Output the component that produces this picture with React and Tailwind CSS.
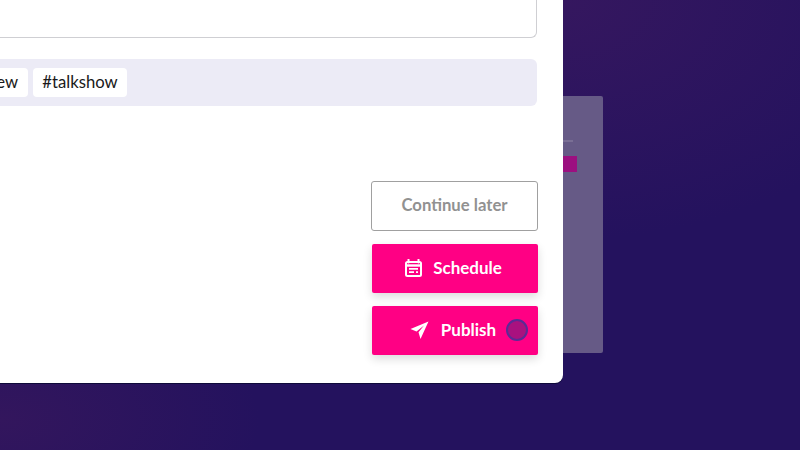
export default function App() {
  const font = { fontFamily: '"Lato", "Open Sans", sans-serif' };
  return (
    <div className="relative w-[800px] h-[450px] overflow-hidden bg-[#24125e]" style={font}>
      <div className="absolute inset-0 bg-[radial-gradient(ellipse_380px_240px_at_560px_0px,#35175f_0%,#35175f00_100%)]" />
      <div className="absolute inset-0 bg-[radial-gradient(ellipse_260px_130px_at_0px_420px,#33165d_0%,#33165d00_100%)]" />
      {/* blurred window behind the card */}
      <div className="absolute left-[500px] top-[96px] w-[103px] h-[257px] rounded-[2px] bg-[#665a86] blur-[0.7px]">
        <div className="absolute left-[63px] top-[44px] w-[10px] h-[2px] bg-[#7a6f95]" />
        <div className="absolute left-[60px] top-[60px] w-[17px] h-[16px] bg-[#9c1080]" />
      </div>

      {/* main card */}
      <div className="relative w-[563px] h-[384px] -mt-px rounded-br-lg bg-white shadow-[0_1px_0_#0f0a3a] flex flex-col items-end pr-[26px]">
        <div className="w-[600px] h-[39px] shrink-0 border-b border-r border-[#cfcfd3] rounded-br-md" />
        <div className="w-[600px] h-[47px] mt-[21px] shrink-0 rounded-md bg-[#ecebf6] overflow-hidden flex items-center gap-[5px]">
          <div className="w-[91px] shrink-0 flex justify-end">
            <span className="shrink-0 h-[29px] px-[10px] rounded-[4px] bg-white text-[16.7px] leading-[29px] text-[#1a1a1a]">#interview</span>
          </div>
          <span className="shrink-0 h-[29px] w-[94px] text-center rounded-[4px] bg-white text-[16.7px] leading-[29px] text-[#1a1a1a]">#talkshow</span>
        </div>

        <div className="mt-[75px] mr-[-1px] w-[167px] flex flex-col gap-[13px]">
          <button className="h-[50px] rounded-[3px] border border-[#a0a0a0] bg-white text-[16.7px] font-bold text-[#919191]">
            Continue later
          </button>
          <button className="h-[49px] pb-[2px] pr-[3px] ml-[1px] w-[166px] rounded-[2px] bg-[#ff0084] text-white text-[17px] font-bold flex items-center justify-center gap-[11px] shadow-[0_4px_10px_rgba(0,0,0,0.14)]">
            <svg width="17" height="18" viewBox="0 0 17 18" fill="none">
              <path d="M3.5 0.5v3M13.5 0.5v3" stroke="#fff" strokeWidth="2" strokeLinecap="round" />
              <rect x="1" y="3" width="15" height="14" rx="1.5" stroke="#fff" strokeWidth="2" />
              <path d="M1 6.5h15" stroke="#fff" strokeWidth="2.4" />
              <path d="M4 9.9h9M4 13.2h5M11 13.2h2" stroke="#fff" strokeWidth="1.7" />
            </svg>
            Schedule
          </button>
          <div className="relative ml-[1px] w-[166px]">
            <button className="w-full h-[49px] pb-[2px] pr-[4px] rounded-[2px] bg-[#ff0084] text-white text-[17px] font-bold flex items-center justify-center gap-[12px] shadow-[0_4px_10px_rgba(0,0,0,0.14)]">
              <svg width="19" height="18" viewBox="0 0 19 18" fill="#fff">
                <path d="M18.5 0.5 L0.5 8 L6.5 10.5 L14 4.5 L8.5 11.2 L10.5 18 Z" />
              </svg>
              Publish
            </button>
            <div className="absolute left-[134px] top-[13px] w-[22px] h-[22px] rounded-full bg-[#a9117f] border-2 border-[#5a2a95]" />
          </div>
        </div>
      </div>
    </div>
  );
}
